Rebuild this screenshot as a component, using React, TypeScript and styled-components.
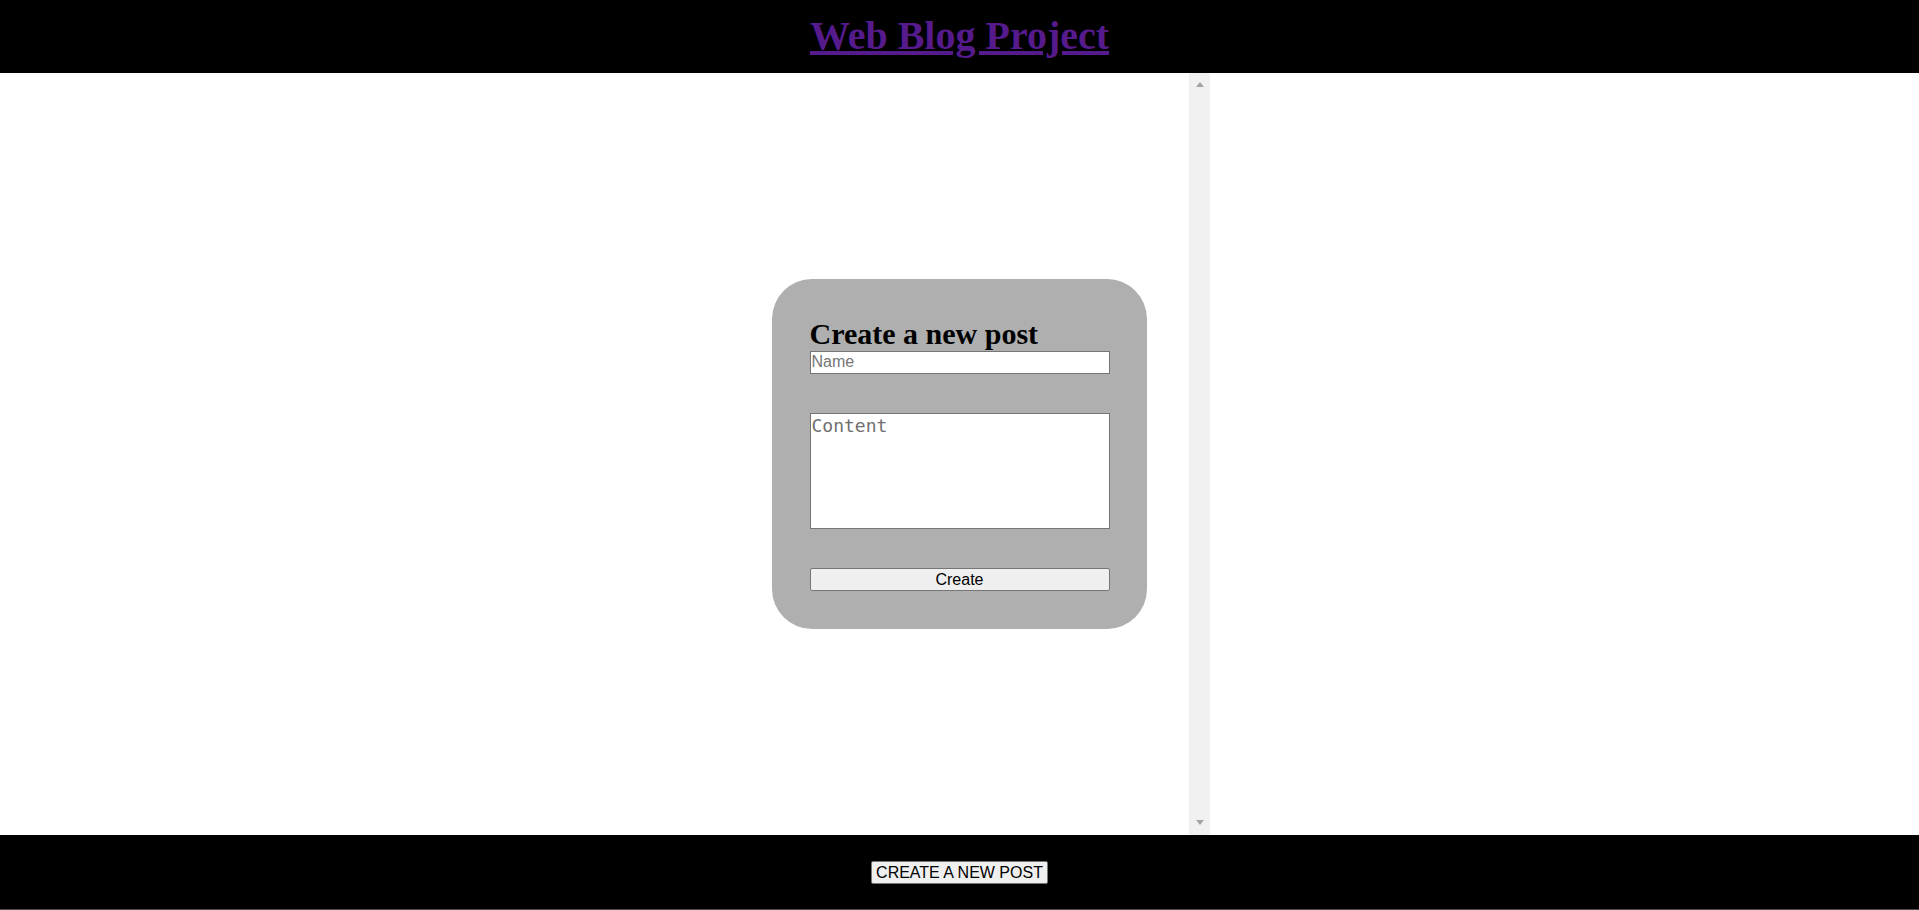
import React from "react";
import styled, { createGlobalStyle } from "styled-components";

const GlobalStyle = createGlobalStyle`
  html, body { margin: 0; padding: 0; background: #ffffff; }
  body { font-family: "Liberation Serif", "Times New Roman", serif; }
  * { box-sizing: border-box; }
`;

const Page = styled.div`
  display: flex;
  flex-direction: column;
  height: 100vh;
  overflow: hidden;
`;

const Header = styled.header`
  height: 73px;
  flex: none;
  background: #000000;
  display: flex;
  justify-content: center;
  padding-top: 13px;
`;

const Title = styled.h1`
  margin: 0;
  font-family: "Liberation Serif", "Times New Roman", serif;
  font-size: 40px;
  font-weight: bold;
  line-height: 46px;
`;

const TitleLink = styled.a`
  color: #551a8b;
  text-decoration: underline;
`;

const Main = styled.main`
  flex: 1;
  display: flex;
  min-height: 0;
  background: #ffffff;
`;

const PostPane = styled.div`
  width: 1210px;
  display: flex;
  height: 100%;
`;

const PostList = styled.section`
  flex: 1;
  height: 100%;
  overflow: hidden;
`;

const ScrollTrack = styled.div`
  width: 21px;
  flex: none;
  background: #f1f1f1;
  display: flex;
  flex-direction: column;
  justify-content: space-between;
  align-items: center;
  padding: 9px 0 10px;
`;

const Arrow = styled.span<{ $down?: boolean }>`
  width: 0;
  height: 0;
  border-left: 4.5px solid transparent;
  border-right: 4.5px solid transparent;
  ${(p) =>
    p.$down
      ? "border-top: 5px solid #a3a3a3;"
      : "border-bottom: 5px solid #a3a3a3;"}
`;

const Footer = styled.footer`
  height: 75px;
  flex: none;
  background: #000000;
  border-bottom: 1px solid #4a4a4a;
  display: flex;
  align-items: center;
  justify-content: center;
  padding-top: 1px;
`;

const NativeButton = styled.button<{ $wide?: boolean }>`
  font-family: "Liberation Sans", Arial, sans-serif;
  font-size: 16px;
  color: #000000;
  background: #efefef;
  border: 1px solid #767676;
  border-radius: 2px;
  height: 23px;
  padding: 0 2px;
  line-height: 19px;
  width: ${(p) => (p.$wide ? "100%" : "177px")};
  cursor: pointer;
`;

const Overlay = styled.div`
  position: fixed;
  top: 0;
  left: 0;
  right: 0;
  bottom: 2px;
  display: flex;
  align-items: center;
  justify-content: center;
  pointer-events: none;
`;

const Card = styled.form`
  width: 375px;
  height: 350px;
  padding: 37.5px;
  background: #afafaf;
  border-radius: 40px;
  display: flex;
  flex-direction: column;
  pointer-events: auto;
`;

const CardTitle = styled.h2`
  margin: 0;
  font-family: "Liberation Serif", "Times New Roman", serif;
  font-size: 30px;
  font-weight: bold;
  line-height: 34px;
  color: #000000;
`;

const NameInput = styled.input`
  width: 100%;
  height: 23px;
  font-family: "Liberation Sans", Arial, sans-serif;
  font-size: 16px;
  padding: 1px 1px;
  border: 1px solid #767676;
  border-radius: 0;
  background: #ffffff;
  margin-bottom: 39px;
  &::placeholder { color: #757575; }
`;

const ContentArea = styled.textarea`
  width: 100%;
  height: 116px;
  font-family: "DejaVu Sans Mono", Consolas, monospace;
  font-size: 18px;
  line-height: 20px;
  padding: 2px 1px;
  border: 1px solid #767676;
  border-radius: 0;
  background: #ffffff;
  resize: none;
  margin: 0 0 39px 0;
  &::placeholder { color: #6f6f6f; }
`;

export default function App() {
  return (
    <>
      <GlobalStyle />
      <Page>
        <Header>
          <Title>
            <TitleLink href="#">Web Blog Project</TitleLink>
          </Title>
        </Header>
        <Main>
          <PostPane>
            <PostList />
            <ScrollTrack>
              <Arrow />
              <Arrow $down />
            </ScrollTrack>
          </PostPane>
        </Main>
        <Footer>
          <NativeButton type="button">CREATE A NEW POST</NativeButton>
        </Footer>
      </Page>
      <Overlay>
        <Card onSubmit={(e) => e.preventDefault()}>
          <CardTitle>Create a new post</CardTitle>
          <NameInput type="text" placeholder="Name" />
          <ContentArea placeholder="Content" />
          <NativeButton type="submit" $wide>
            Create
          </NativeButton>
        </Card>
      </Overlay>
    </>
  );
}
